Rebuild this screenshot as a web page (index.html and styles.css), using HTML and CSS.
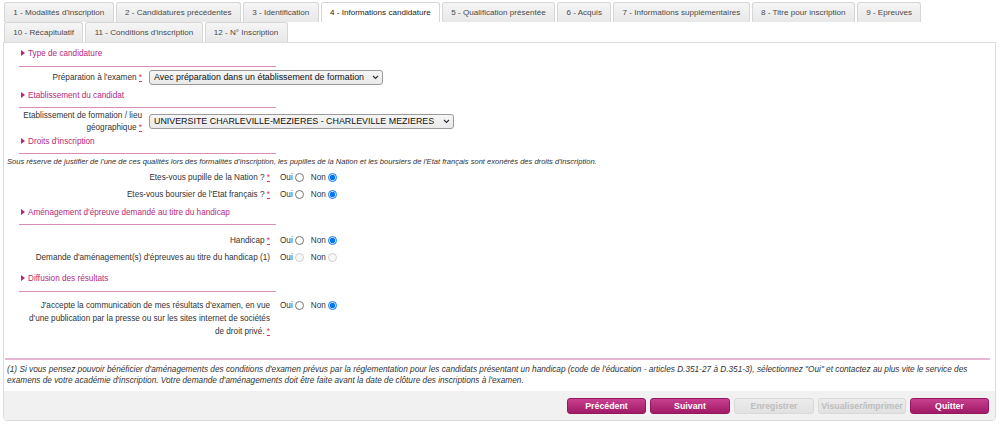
FILE: index.html
```html
<!DOCTYPE html>
<html lang="fr">
<head>
<meta charset="utf-8">
<title>Informations candidature</title>
<link rel="stylesheet" href="styles.css">
</head>
<body>
<div class="tabs">
  <div class="tabrow">
    <span class="tab">1 - Modalités d'inscription</span>
    <span class="tab">2 - Candidatures précédentes</span>
    <span class="tab">3 - Identification</span>
    <span class="tab active">4 - Informations candidature</span>
    <span class="tab">5 - Qualification présentée</span>
    <span class="tab">6 - Acquis</span>
    <span class="tab">7 - Informations supplémentaires</span>
    <span class="tab">8 - Titre pour inscription</span>
    <span class="tab">9 - Epreuves</span>
  </div>
  <div class="tabrow">
    <span class="tab">10 - Récapitulatif</span>
    <span class="tab">11 - Conditions d'inscription</span>
    <span class="tab">12 - N° Inscription</span>
  </div>
</div>

<div class="panel">
  <div class="legend l1"><span class="tri"></span>Type de candidature</div>
  <div class="rule"></div>
  <div class="row row-sel r1">
    <label class="lab lab-narrow">Préparation à l'examen <abbr class="req">*</abbr></label>
    <span class="selwrap">
      <select class="sel sel-a"><option>Avec préparation dans un établissement de formation</option></select>
      <svg class="chev" width="7" height="5" viewBox="0 0 7 5"><path d="M1 1 L3.5 3.5 L6 1" fill="none" stroke="#333" stroke-width="1.2"/></svg>
    </span>
  </div>

  <div class="legend l2"><span class="tri"></span>Etablissement du candidat</div>
  <div class="rule"></div>
  <div class="row row-sel r2">
    <label class="lab lab-narrow lab-two">Etablissement de formation / lieu géographique <abbr class="req">*</abbr></label>
    <span class="selwrap">
      <select class="sel sel-b"><option>UNIVERSITE CHARLEVILLE-MEZIERES - CHARLEVILLE MEZIERES</option></select>
      <svg class="chev" width="7" height="5" viewBox="0 0 7 5"><path d="M1 1 L3.5 3.5 L6 1" fill="none" stroke="#333" stroke-width="1.2"/></svg>
    </span>
  </div>

  <div class="legend l3"><span class="tri"></span>Droits d'inscription</div>
  <div class="rule"></div>
  <p class="note">Sous réserve de justifier de l'une de ces qualités lors des formalités d'inscription, les pupilles de la Nation et les boursiers de l'Etat français sont exonérés des droits d'inscription.</p>
  <div class="row r3">
    <label class="lab lab-wide">Etes-vous pupille de la Nation ? <abbr class="req">*</abbr></label>
    <div class="choices"><span>Oui</span><input type="radio" name="pup"><span class="non">Non</span><input type="radio" name="pup" checked></div>
  </div>
  <div class="row">
    <label class="lab lab-wide">Etes-vous boursier de l'Etat français ? <abbr class="req">*</abbr></label>
    <div class="choices"><span>Oui</span><input type="radio" name="bou"><span class="non">Non</span><input type="radio" name="bou" checked></div>
  </div>

  <div class="legend l4"><span class="tri"></span>Aménagement d'épreuve demandé au titre du handicap</div>
  <div class="rule"></div>
  <div class="row r4">
    <label class="lab lab-wide">Handicap <abbr class="req">*</abbr></label>
    <div class="choices"><span>Oui</span><input type="radio" name="hand"><span class="non">Non</span><input type="radio" name="hand" checked></div>
  </div>
  <div class="row">
    <label class="lab lab-wide">Demande d'aménagement(s) d'épreuves au titre du handicap (1)</label>
    <div class="choices"><span>Oui</span><input type="radio" name="dem" disabled><span class="non">Non</span><input type="radio" name="dem" disabled></div>
  </div>

  <div class="legend l5"><span class="tri"></span>Diffusion des résultats</div>
  <div class="rule"></div>
  <div class="row row-top r5">
    <label class="lab lab-wide lab-multi">J'accepte la communication de mes résultats d'examen, en vue d'une publication par la presse ou sur les sites internet de sociétés de droit privé. <abbr class="req">*</abbr></label>
    <div class="choices"><span>Oui</span><input type="radio" name="dif"><span class="non">Non</span><input type="radio" name="dif" checked></div>
  </div>

  <div class="pinkline"></div>
  <p class="footnote">(1) Si vous pensez pouvoir bénéficier d'aménagements des conditions d'examen prévus par la réglementation pour les candidats présentant un handicap (code de l'éducation - articles D.351-27 à D.351-3), sélectionnez "Oui" et contactez au plus vite le service des examens de votre académie d'inscription. Votre demande d'aménagements doit être faite avant la date de clôture des inscriptions à l'examen.</p>

  <div class="actions">
    <button class="btn b-prev">Précédent</button>
    <button class="btn b-next">Suivant</button>
    <button class="btn b-save" disabled>Enregistrer</button>
    <button class="btn b-print" disabled>Visualiser/imprimer</button>
    <button class="btn b-quit">Quitter</button>
  </div>
</div>
</body>
</html>
```

FILE: styles.css
```css
* { box-sizing: border-box; }

body {
  margin: 0;
  background: #fff;
  color: #333;
  font-family: "Liberation Sans", Arial, sans-serif;
  font-size: 8.2px;
}

/* ---------- tabs ---------- */
.tabs {
  padding: 2px 0 0 4px;
}
.tabrow {
  display: flex;
  gap: 2px;
}
.tab {
  height: 20px;
  line-height: 19px;
  padding: 0 8.3px;
  border: 1px solid #d6d6d6;
  border-bottom: none;
  border-radius: 3px 3px 0 0;
  background: linear-gradient(#f5f5f5, #e8e8e8);
  color: #4a4a4a;
  font-size: 8.1px;
  white-space: nowrap;
}
.tab.active {
  background: #fff;
  color: #222;
}

/* ---------- panel ---------- */
.panel {
  margin-left: 3px;
  width: 993px;
  border: 1px solid #dcdcdc;
  border-radius: 0 0 4px 4px;
  overflow: hidden;
}

.legend {
  display: flex;
  align-items: center;
  height: 14px;
  margin-left: 17px;
  color: #b5297b;
  font-size: 8.2px;
}
.tri {
  width: 0;
  height: 0;
  border-left: 4px solid #b5297b;
  border-top: 3px solid transparent;
  border-bottom: 3px solid transparent;
  margin-right: 3px;
}
.l1 { margin-top: 3px; }
.l2 { margin-top: 3px; }
.l3 { margin-top: 1px; }
.l4 { margin-top: 2px; }
.l5 { margin-top: 5px; }

.rule {
  margin: 5px 0 0 15px;
  width: 257px;
  border-top: 1px solid #d98cbb;
}
.l1 + .rule, .l5 + .rule { margin-top: 6px; }

/* ---------- rows ---------- */
.row {
  display: flex;
  align-items: center;
  height: 17px;
}
.row-sel { height: 16px; }
.r1 { margin-top: 2px; }
.r2 { margin-top: 2px; height: 23px; }
.r3 { margin-top: 2px; }
.r4 { margin-top: 7px; }
.r5 { margin-top: 7px; height: auto; align-items: flex-start; }

.lab {
  text-align: right;
  color: #333;
}
.lab-narrow {
  width: 124px;
  margin-left: 14px;
}
.lab-two {
  line-height: 11.5px;
}
.lab-wide {
  width: 248px;
  margin-left: 18px;
}
.lab-multi {
  line-height: 13px;
}

.req {
  color: #e0335e;
  text-decoration: underline;
  text-decoration-style: solid;
}

.selwrap {
  position: relative;
  display: flex;
  margin-left: 7px;
}
.sel {
  appearance: none;
  -webkit-appearance: none;
  height: 15px;
  padding: 0 14px 0 4px;
  font-family: "Liberation Sans", Arial, sans-serif;
  font-size: 8.9px;
  line-height: 13px;
  color: #111;
  background: linear-gradient(#f6f6f6, #e9e9e9);
  border: 1px solid #9a9a9a;
  border-radius: 3px;
}
.sel-a { width: 234px; }
.sel-b { width: 305px; }
.chev {
  position: absolute;
  right: 4px;
  top: 5px;
  pointer-events: none;
}

.choices {
  display: flex;
  align-items: center;
  margin-left: 10px;
  color: #333;
}
.r5 .choices { height: 13px; }
.choices input {
  width: 9px;
  height: 9px;
  margin: 0 0 0 2px;
}
.choices .non { margin-left: 7px; }

.note {
  margin: 3px 0 0 3px;
  height: 10px;
  line-height: 10px;
  font-size: 7.55px;
  font-style: italic;
  color: #333;
  white-space: nowrap;
}

/* ---------- footnote ---------- */
.pinkline {
  margin: 20px 5px 0 1px;
  height: 2px;
  background: #e7b6d3;
}
.footnote {
  margin: 4px 8px 0 3px;
  line-height: 11px;
  font-size: 8.25px;
  font-style: italic;
  color: #333;
}

/* ---------- actions ---------- */
.actions {
  margin-top: 5px;
  height: 29px;
  padding: 7px 6px 0 0;
  display: flex;
  justify-content: flex-end;
  gap: 4px;
  background: #f1f1f1;
}
.btn {
  height: 16px;
  padding: 0;
  border: 1px solid #94185d;
  border-radius: 3px;
  background: linear-gradient(#c8408f, #a01a66);
  color: #fff;
  font-family: "Liberation Sans", Arial, sans-serif;
  font-size: 8.8px;
  font-weight: bold;
}
.btn:disabled {
  border-color: #d9d9d9;
  background: linear-gradient(#ececec, #e1e1e1);
  color: #bdbdbd;
}
.b-prev { width: 79px; }
.b-next { width: 80px; }
.b-save { width: 80px; }
.b-print { width: 88px; }
.b-quit { width: 79px; }
```
